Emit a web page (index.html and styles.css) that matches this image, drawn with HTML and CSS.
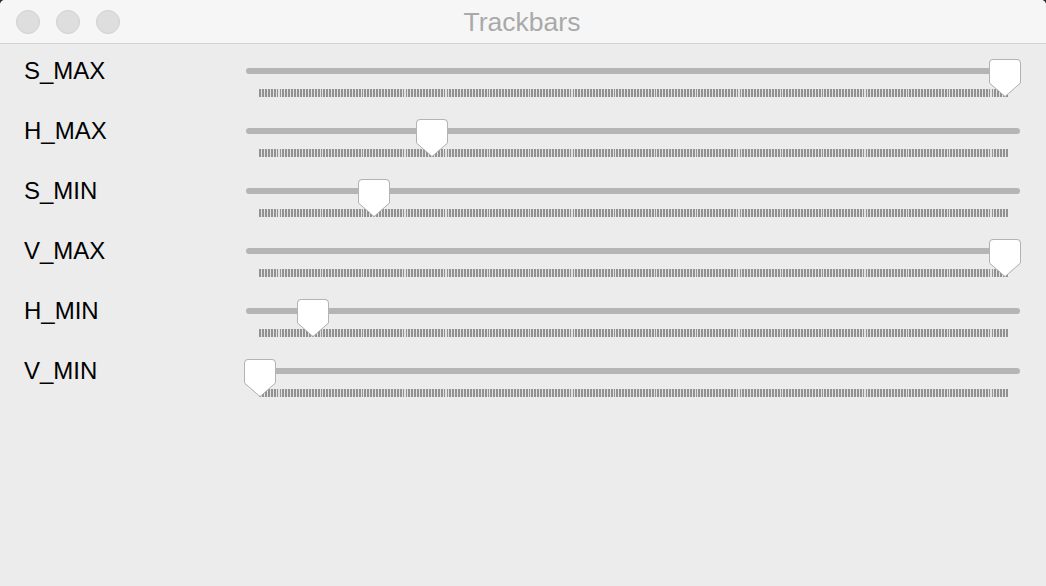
FILE: index.html
```html
<!DOCTYPE html>
<html>
<head>
<meta charset="utf-8">
<title>Trackbars</title>
<link rel="stylesheet" href="styles.css">
</head>
<body>
<div class="window">
  <div class="titlebar">
    <div class="lights"><span class="light"></span><span class="light"></span><span class="light"></span></div>
    <div class="title">Trackbars</div>
  </div>
  <div class="content">
    <div class="row">
      <div class="label">S_MAX</div>
      <div class="slider"><div class="track"></div><div class="ticks"></div>
        <svg class="thumb" style="left:743px" width="32" height="38" viewBox="0 0 32 38"><path d="M4 0.5H28Q31.5 0.5 31.5 4V24L16 37.5L0.5 24V4Q0.5 0.5 4 0.5Z"/></svg>
      </div>
    </div>
    <div class="row">
      <div class="label">H_MAX</div>
      <div class="slider"><div class="track"></div><div class="ticks"></div>
        <svg class="thumb" style="left:170px" width="32" height="38" viewBox="0 0 32 38"><path d="M4 0.5H28Q31.5 0.5 31.5 4V24L16 37.5L0.5 24V4Q0.5 0.5 4 0.5Z"/></svg>
      </div>
    </div>
    <div class="row">
      <div class="label">S_MIN</div>
      <div class="slider"><div class="track"></div><div class="ticks"></div>
        <svg class="thumb" style="left:112px" width="32" height="38" viewBox="0 0 32 38"><path d="M4 0.5H28Q31.5 0.5 31.5 4V24L16 37.5L0.5 24V4Q0.5 0.5 4 0.5Z"/></svg>
      </div>
    </div>
    <div class="row">
      <div class="label">V_MAX</div>
      <div class="slider"><div class="track"></div><div class="ticks"></div>
        <svg class="thumb" style="left:743px" width="32" height="38" viewBox="0 0 32 38"><path d="M4 0.5H28Q31.5 0.5 31.5 4V24L16 37.5L0.5 24V4Q0.5 0.5 4 0.5Z"/></svg>
      </div>
    </div>
    <div class="row">
      <div class="label">H_MIN</div>
      <div class="slider"><div class="track"></div><div class="ticks"></div>
        <svg class="thumb" style="left:51px" width="32" height="38" viewBox="0 0 32 38"><path d="M4 0.5H28Q31.5 0.5 31.5 4V24L16 37.5L0.5 24V4Q0.5 0.5 4 0.5Z"/></svg>
      </div>
    </div>
    <div class="row">
      <div class="label">V_MIN</div>
      <div class="slider"><div class="track"></div><div class="ticks"></div>
        <svg class="thumb" style="left:-2px" width="32" height="38" viewBox="0 0 32 38"><path d="M4 0.5H28Q31.5 0.5 31.5 4V24L16 37.5L0.5 24V4Q0.5 0.5 4 0.5Z"/></svg>
      </div>
    </div>
  </div>
</div>
</body>
</html>
```
FILE: styles.css
```css
html, body {
  margin: 0;
  padding: 0;
  background: #2b2b2b;
}
body {
  width: 1046px;
  height: 586px;
  overflow: hidden;
  font-family: "Liberation Sans", Arial, sans-serif;
}
.window {
  width: 1046px;
  height: 586px;
  background: #ececec;
  border-radius: 5px 5px 0 0;
  overflow: hidden;
}
.titlebar {
  position: relative;
  height: 43px;
  background: #f6f6f6;
  border-bottom: 1px solid #d2d2d2;
}
.lights {
  position: absolute;
  left: 16px;
  top: 10px;
  display: flex;
  gap: 16px;
}
.light {
  width: 22px;
  height: 22px;
  border-radius: 50%;
  background: #dedede;
  border: 1px solid #d0d0d0;
}
.title {
  text-align: center;
  font-size: 26.5px;
  line-height: 44px;
  color: #a9a9a9;
  padding-right: 2px;
}
.content {
  display: flex;
  flex-direction: column;
}
.row {
  height: 60px;
  display: flex;
}
.label {
  width: 222px;
  padding-left: 24px;
  padding-top: 13px;
  font-size: 24px;
  line-height: 28px;
  color: #000;
}
.slider {
  position: relative;
  width: 774px;
  display: flex;
  flex-direction: column;
}
.track {
  margin-top: 24px;
  height: 6px;
  border-radius: 3px;
  background: #b5b5b5;
}
.ticks {
  margin-top: 15px;
  margin-left: 13px;
  width: 749px;
  height: 8px;
  background: repeating-linear-gradient(90deg, #929292 0, #929292 1.9px, #e2e2e2 1.9px, #e2e2e2 2.93px);
}
.thumb {
  position: absolute;
  top: 15px;
  filter: drop-shadow(0 0.5px 0.5px rgba(0,0,0,0.15));
}
.thumb path {
  fill: #ffffff;
  stroke: #b3b3b3;
  stroke-width: 1;
}
```
